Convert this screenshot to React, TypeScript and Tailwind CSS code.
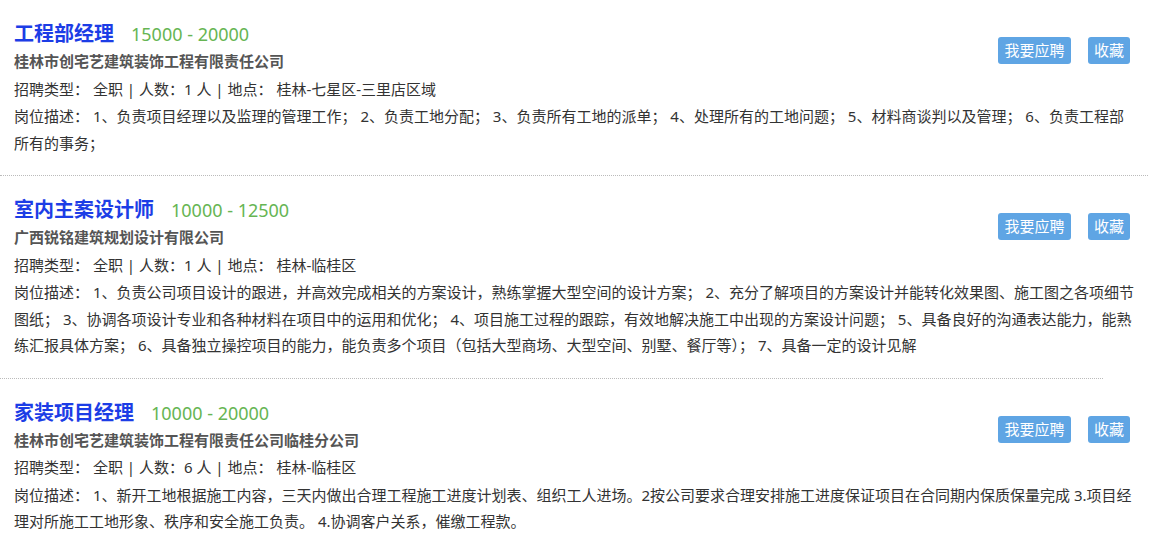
import React from 'react';

const JOBS = [
  {
    title: '工程部经理',
    salary: '15000 - 20000',
    company: '桂林市创宅艺建筑装饰工程有限责任公司',
    type: '全职',
    count: 1,
    place: '桂林-七星区-三里店区域',
    desc: '1、负责项目经理以及监理的管理工作； 2、负责工地分配； 3、负责所有工地的派单； 4、处理所有的工地问题； 5、材料商谈判以及管理； 6、负责工程部所有的事务；',
    line: 'w-[1148px]',
  },
  {
    title: '室内主案设计师',
    salary: '10000 - 12500',
    company: '广西锐铭建筑规划设计有限公司',
    type: '全职',
    count: 1,
    place: '桂林-临桂区',
    desc: '1、负责公司项目设计的跟进，并高效完成相关的方案设计，熟练掌握大型空间的设计方案； 2、充分了解项目的方案设计并能转化效果图、施工图之各项细节图纸； 3、协调各项设计专业和各种材料在项目中的运用和优化； 4、项目施工过程的跟踪，有效地解决施工中出现的方案设计问题； 5、具备良好的沟通表达能力，能熟练汇报具体方案； 6、具备独立操控项目的能力，能负责多个项目（包括大型商场、大型空间、别墅、餐厅等）； 7、具备一定的设计见解',
    line: 'w-[1103px]',
  },
  {
    title: '家装项目经理',
    salary: '10000 - 20000',
    company: '桂林市创宅艺建筑装饰工程有限责任公司临桂分公司',
    type: '全职',
    count: 6,
    place: '桂林-临桂区',
    desc: '1、新开工地根据施工内容，三天内做出合理工程施工进度计划表、组织工人进场。2按公司要求合理安排施工进度保证项目在合同期内保质保量完成 3.项目经理对所施工工地形象、秩序和安全施工负责。 4.协调客户关系，催缴工程款。',
    line: '',
  },
];

export default function App() {
  return (
    <div className="w-[1176px] h-[536px] overflow-hidden bg-white text-[#333] font-['Noto_Sans','Noto_Sans_CJK_SC',sans-serif]">
      {JOBS.map((job, i) => (
        <div key={i}>
          <div className="relative px-[14px] pt-[20px] pb-[19px] w-[1150px]">
            <div className="flex items-baseline gap-[17px] leading-[28px]">
              <span className="text-[20px] font-bold text-[#1c3de6]">{job.title}</span>
              <span className="text-[18px] text-[#66b553]">{job.salary}</span>
            </div>
            <div className="text-[15px] leading-[27.5px] font-bold text-[#555]">{job.company}</div>
            <div className="text-[15px] leading-[27.5px]">
              {`招聘类型： ${job.type} | 人数：${job.count} 人 | 地点： ${job.place}`}
            </div>
            <div className="text-[15px] leading-[26.5px] w-[1124px]">{`岗位描述： ${job.desc}`}</div>
            <div className="absolute right-[20px] top-[37px] flex gap-[17px]">
              <button className="h-[27px] px-[6.5px] rounded-[3px] bg-[#5fa5e4] text-white text-[15px]">我要应聘</button>
              <button className="h-[27px] px-[6px] rounded-[3px] bg-[#5fa5e4] text-white text-[15px]">收藏</button>
            </div>
          </div>
          {job.line && <div className={`${job.line} border-b border-dotted border-[#bbb]`} />}
        </div>
      ))}
    </div>
  );
}
